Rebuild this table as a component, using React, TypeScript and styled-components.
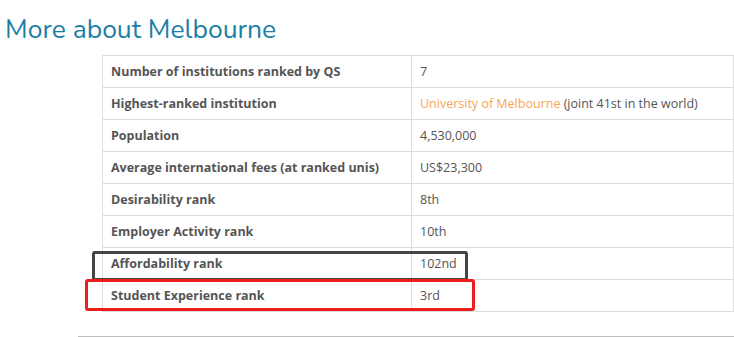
import React from "react";
import styled, { createGlobalStyle } from "styled-components";

const Global = createGlobalStyle`
  html, body { margin: 0; padding: 0; background: #fff; }
  body { font-family: "Open Sans", "Liberation Sans", sans-serif; }
`;

const Page = styled.div`
  width: 734px;
  height: 337px;
  overflow: hidden;
  display: flex;
  flex-direction: column;
`;

const Title = styled.h2`
  margin: 0;
  padding: 13px 0 0 5px;
  height: 55px;
  box-sizing: border-box;
  font-family: "Nunito", "Lato", "Open Sans", sans-serif;
  font-weight: 400;
  font-size: 26.5px;
  line-height: 33px;
  color: #1b7fa6;
`;

const TableWrap = styled.div`
  position: relative;
  margin-left: 102px;
  width: 632px;
`;

const Table = styled.table`
  border-collapse: collapse;
  width: 100%;
  font-size: 12.5px;
  color: #555;
`;

const Row = styled.tr`
  height: 32px;
`;

const Cell = styled.td<{ $label?: boolean }>`
  border: 1px solid #dddddd;
  padding: 0 8px;
  box-sizing: border-box;
  font-weight: ${(p) => (p.$label ? 700 : 400)};
  width: ${(p) => (p.$label ? "309px" : "auto")};
  vertical-align: middle;
`;

const Link = styled.span`
  color: #f8a55b;
`;

const Mark = styled.div<{ $color: string; $x: number; $y: number; $w: number; $h: number }>`
  position: absolute;
  left: ${(p) => p.$x}px;
  top: ${(p) => p.$y}px;
  width: ${(p) => p.$w}px;
  height: ${(p) => p.$h}px;
  border: 3px solid ${(p) => p.$color};
  border-radius: 3px;
  box-sizing: border-box;
  pointer-events: none;
`;

const Rule = styled.div`
  margin: 24px 0 0 78px;
  border-top: 1px solid #bdbdbd;
`;

const rows: [string, React.ReactNode][] = [
  ["Number of institutions ranked by QS", "7"],
  [
    "Highest-ranked institution",
    <>
      <Link>University of Melbourne</Link> (joint 41st in the world)
    </>,
  ],
  ["Population", "4,530,000"],
  ["Average international fees (at ranked unis)", "US$23,300"],
  ["Desirability rank", "8th"],
  ["Employer Activity rank", "10th"],
  ["Affordability rank", "102nd"],
  ["Student Experience rank", "3rd"],
];

export default function App() {
  return (
    <>
      <Global />
      <Page>
        <Title>More about Melbourne</Title>
        <TableWrap>
          <Table>
            <tbody>
              {rows.map(([k, v], i) => (
                <Row key={i}>
                  <Cell $label>{k}</Cell>
                  <Cell>{v}</Cell>
                </Row>
              ))}
            </tbody>
          </Table>
          <Mark $color="#444444" $x={-10} $y={196} $w={376} $h={30} />
          <Mark $color="#ee1c1c" $x={-17} $y={224} $w={390} $h={32} />
        </TableWrap>
        <Rule />
      </Page>
    </>
  );
}
